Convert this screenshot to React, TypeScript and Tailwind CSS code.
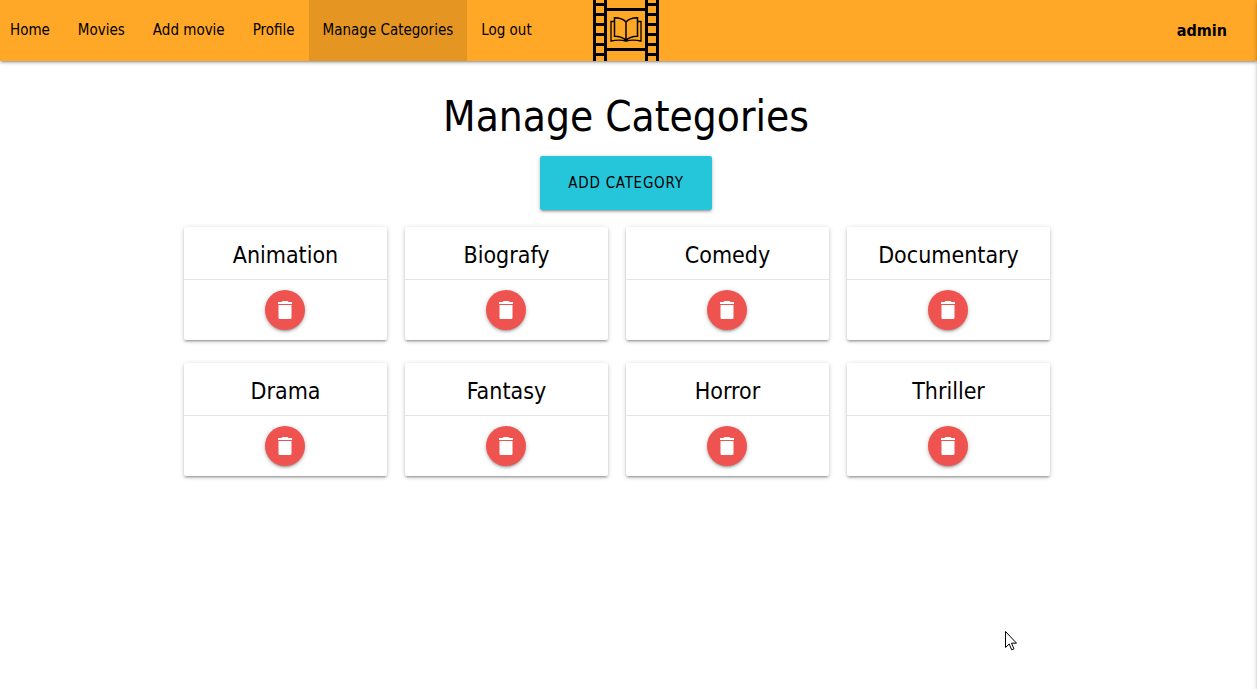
import React from "react";

const navLinks = ["Home", "Movies", "Add movie", "Profile", "Manage Categories", "Log out"];
const categories = ["Animation", "Biografy", "Comedy", "Documentary", "Drama", "Fantasy", "Horror", "Thriller"];
const sprockets = [4.5, 14.5, 24.5, 34.5, 44.5, 54.5];

function Logo() {
  return (
    <svg viewBox="0 0 66 61" className="block h-[61px] w-[66px]" role="img" aria-label="Movie library">
      <g stroke="#000" fill="none">
        <path d="M1.500 0v61M12.500 0v61M53.500 0v61M64.500 0v61" strokeWidth="3" />
        <path d="M13 9.500h40M13 49.500h40" strokeWidth="3" />
        {sprockets.map((y) => (
          <path key={y} d={`M2 ${y}h10M54 ${y}h10`} strokeWidth="3" />
        ))}
        <path
          d="M33 22c-3-3.600-7-4.300-11.500-4.300v18.500c4.500 0 8.500.8 11.500 4.300 3-3.500 7-4.300 11.500-4.300v-18.500c-4.500 0-8.500.7-11.500 4.300zv18"
          strokeWidth="1.500"
        />
        <path d="M21 21.500h-3v19.500c5-1 10-1.200 15 0 5-1.200 10-1 15 0v-19.500h-3" strokeWidth="1.300" />
      </g>
    </svg>
  );
}

function TrashIcon() {
  return (
    <svg viewBox="0 0 24 24" className="size-6" fill="#fff" aria-hidden="true">
      <path d="M5.500 19.500c0 1 .7 1.500 1.500 1.500h10c.8 0 1.500-.5 1.500-1.500V7h-13v12.500zM19 4h-3.500l-1-1h-5l-1 1H5v2h14V4z" />
    </svg>
  );
}

function CategoryCard({ name }: { name: string }) {
  return (
    <article className="rounded-xs bg-white text-center shadow-[0_2px_2px_0_rgba(0,0,0,0.14),0_3px_1px_-2px_rgba(0,0,0,0.12),0_1px_5px_0_rgba(0,0,0,0.2)]">
      <h2 className="pt-3 pb-2 text-[23px] leading-8">{name}</h2>
      <div className="flex justify-center border-t border-[#e4e4e4] py-2.5 pr-0.5">
        <button
          type="button"
          aria-label={`Delete ${name}`}
          className="flex size-10 items-center justify-center rounded-full bg-[#ef5350] shadow-[0_2px_2px_0_rgba(0,0,0,0.14),0_3px_1px_-2px_rgba(0,0,0,0.12),0_1px_5px_0_rgba(0,0,0,0.2)]"
        >
          <TrashIcon />
        </button>
      </div>
    </article>
  );
}

export default function App() {
  return (
    <div className="min-h-screen bg-white font-['DejaVu_Sans_Condensed','DejaVu_Sans',sans-serif] text-black">
      <header className="relative flex h-[61px] items-center justify-between bg-[#ffa726] pr-[30px] shadow-[0_2px_2px_0_rgba(0,0,0,0.14),0_3px_1px_-2px_rgba(0,0,0,0.12),0_1px_5px_0_rgba(0,0,0,0.2)]">
        <nav className="-ml-1 flex h-full">
          {navLinks.map((label) => (
            <a
              key={label}
              href="#"
              className={
                label === "Manage Categories"
                  ? "flex items-center bg-[#e59622] px-3.5 text-[15px]"
                  : "flex items-center px-3.5 text-[15px]"
              }
            >
              {label}
            </a>
          ))}
        </nav>
        <a href="#" className="absolute top-0 left-1/2 -ml-[36px]">
          <Logo />
        </a>
        <span className="text-base font-bold">admin</span>
      </header>

      <main className="pr-[5px]">
        <div className="mx-auto flex max-w-[884px] flex-col items-center">
          <h1 className="mt-[30px] text-[42px] leading-[52px]">Manage Categories</h1>
          <button
            type="button"
            className="mt-[13px] h-[54px] rounded-xs bg-[#26c6da] px-7 text-[15px] tracking-wider uppercase shadow-[0_2px_2px_0_rgba(0,0,0,0.14),0_3px_1px_-2px_rgba(0,0,0,0.12),0_1px_5px_0_rgba(0,0,0,0.2)]"
          >
            Add category
          </button>
          <section className="mt-[17px] grid w-full grid-cols-4 gap-x-[18px] gap-y-[23px] pr-[18px]">
            {categories.map((name) => (
              <CategoryCard key={name} name={name} />
            ))}
          </section>
        </div>
      </main>

      <aside
        aria-hidden="true"
        className="fixed inset-y-0 left-full w-72 bg-white shadow-[0_2px_2px_0_rgba(0,0,0,0.14),0_3px_1px_-2px_rgba(0,0,0,0.12),0_1px_5px_0_rgba(0,0,0,0.2)]"
      />
      <svg viewBox="0 0 12 20" className="pointer-events-none fixed top-[631px] left-[1005px] h-5 w-3" aria-hidden="true">
        <path d="M.5.5v16l3.700-3.500 2.500 5.800 2.300-1-2.500-5.600h5z" fill="#fff" stroke="#000" strokeWidth="1" />
      </svg>
    </div>
  );
}
